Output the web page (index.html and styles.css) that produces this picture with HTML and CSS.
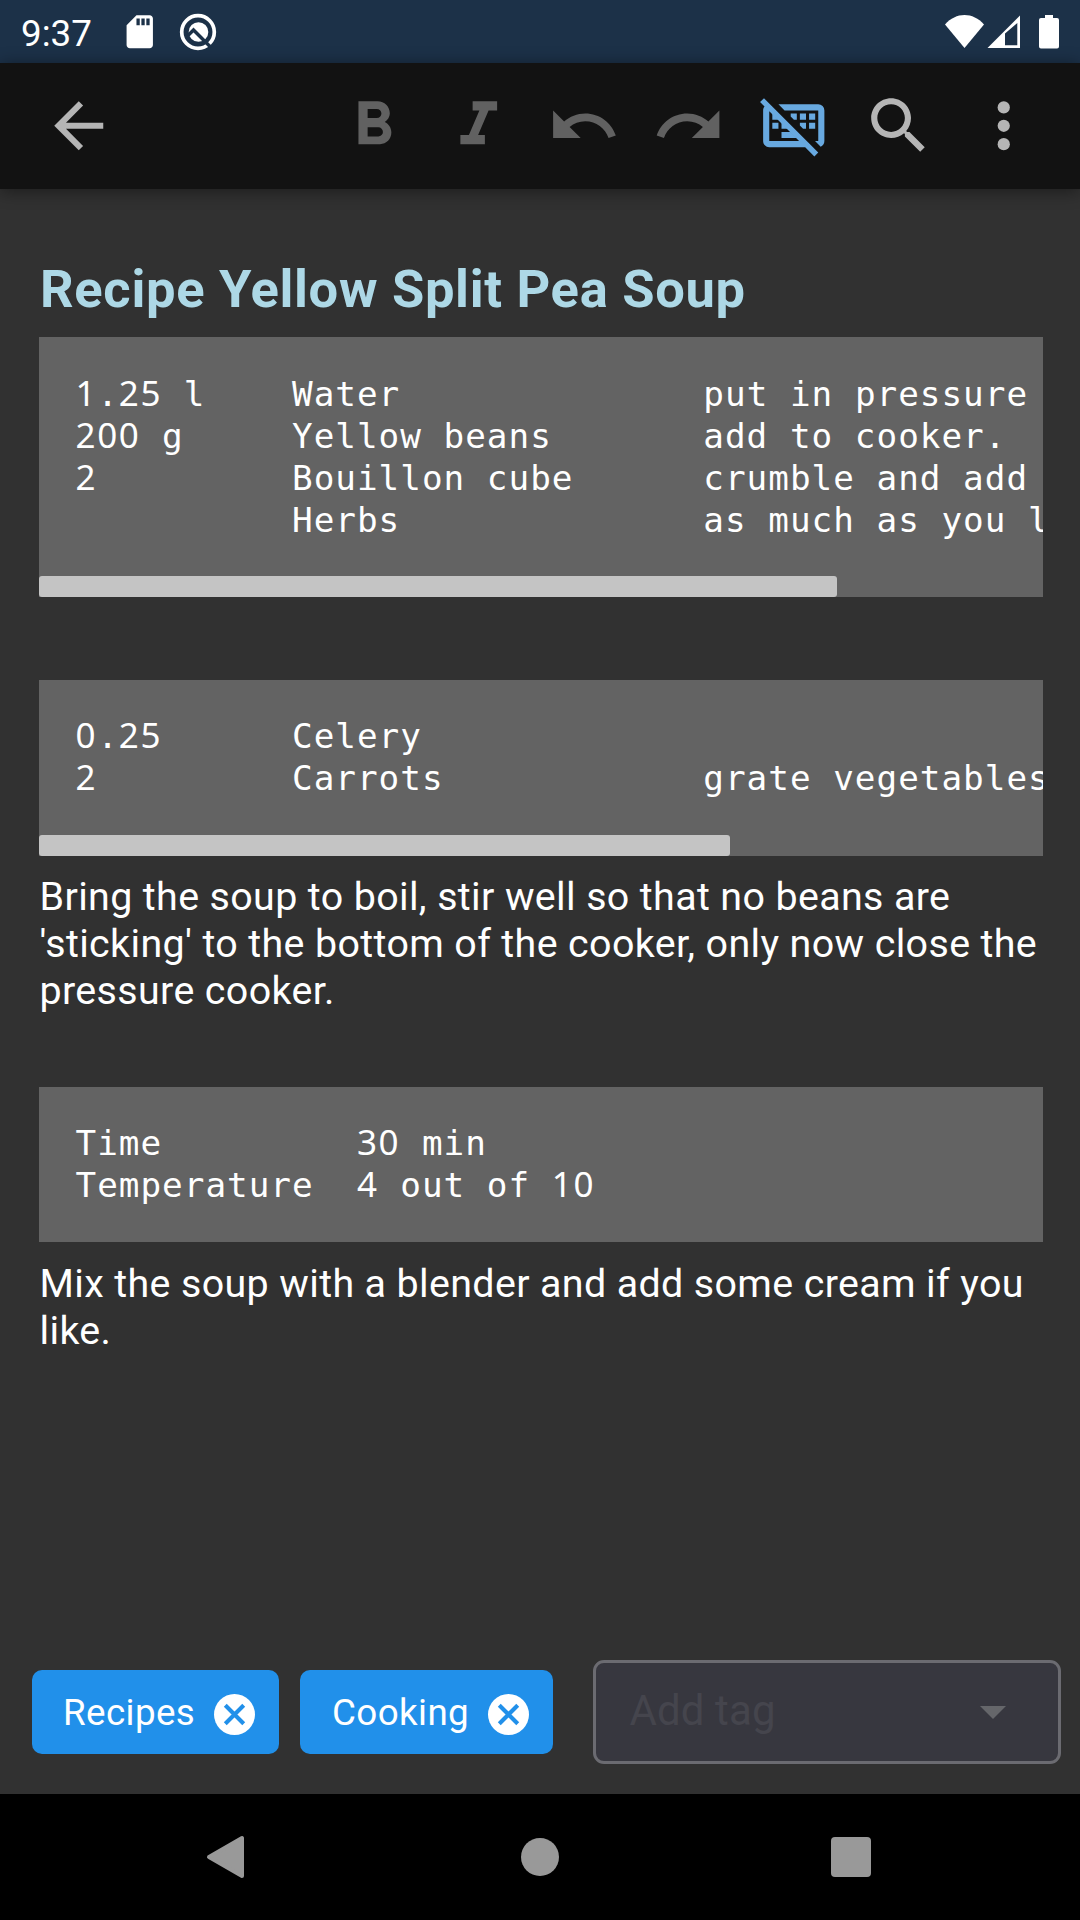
FILE: index.html
```html
<!DOCTYPE html>
<html lang="en">
<head>
<meta charset="utf-8">
<title>Recipe Yellow Split Pea Soup</title>
<link rel="stylesheet" href="styles.css">
</head>
<body>
<div class="screen">
  <header class="status">
    <span class="clock">9:37</span>
    <svg class="sd" viewBox="0 0 24 24"><path d="M18 2h-8L4 8v12c0 1.100.9 2 2 2h12c1.100 0 2-.9 2-2V4c0-1.100-.9-2-2-2zm-6 6h-2V4h2v4zm3 0h-2V4h2v4zm3 0h-2V4h2v4z"/></svg>
    <svg class="debug" viewBox="0 0 38 38">
      <circle cx="19" cy="19" r="16.300" fill="none" stroke="#fff" stroke-width="3.700"/>
      <circle cx="19.500" cy="19" r="9.800"/>
      <path class="cut" d="M9 22.500L14.500 17L32 34.500"/>
    </svg>
    <svg class="signals" viewBox="0 0 116 36">
      <path d="M0 10.500C11-2.200 28-2.200 39 10.500L19.500 34z"/>
      <path fill-rule="evenodd" d="M42.500 34L75 1.500V34zM60 19.500V31.300H72.300V9z"/>
      <path d="M100 1h8v3h4q2 0 2 2v26.500q0 2-2 2H96q-2 0-2-2V6q0-2 2-2h4z"/>
    </svg>
  </header>
  <nav class="toolbar">
    <svg class="icon back" viewBox="0 0 24 24"><path d="M20 11H7.830l5.590-5.590L12 4l-8 8 8 8 1.410-1.410L7.830 13H20v-2z"/></svg>
    <div class="actions">
      <svg class="icon dim" viewBox="0 0 24 24"><path d="M13.500,15.500H10V12.500H13.500A1.500,1.500 0 0,1 15,14A1.500,1.500 0 0,1 13.500,15.500M10,6.500H13A1.500,1.500 0 0,1 14.500,8A1.500,1.500 0 0,1 13,9.500H10M15.600,10.790C16.570,10.110 17.250,9 17.250,8C17.250,5.740 15.500,4 13.250,4H7V18H14.040C16.140,18 17.750,16.300 17.750,14.210C17.750,12.690 16.890,11.390 15.600,10.790Z"/></svg>
      <svg class="icon dim" viewBox="0 0 24 24"><path d="M10,4V7H12.210L8.790,15H6V18H14V15H11.790L15.210,7H18V4H10Z"/></svg>
      <svg class="icon dim" viewBox="0 0 24 24"><path d="M12.500 8c-2.650 0-5.050.99-6.900 2.600L2 7v9h9l-3.620-3.620c1.390-1.160 3.160-1.880 5.120-1.880 3.540 0 6.550 2.310 7.600 5.500l2.370-.78C21.080 11.030 17.150 8 12.500 8z"/></svg>
      <svg class="icon dim" viewBox="0 0 24 24"><path d="M18.400 10.600C16.550 8.990 14.150 8 11.500 8c-4.650 0-8.580 3.030-9.960 7.220L3.900 16c1.050-3.190 4.050-5.500 7.600-5.500 1.950 0 3.730.72 5.120 1.880L13 16h9V7l-3.600 3.600z"/></svg>
      <svg class="icon active" viewBox="0 0 24 24">
        <path fill-rule="evenodd" d="M1,4.270L2.280,3 20,20.720 18.730,22 15.730,19H4C2.890,19 2,18.100 2,17V7C2,6.500 2.180,6.070 2.460,5.730zM4,7.270V17H13.730z"/>
        <path d="M7,5H20a2,2 0 0 1 2,2v10c0,.86-.5,1.600-1.200,1.860L18.950,17H20V7H9z"/>
        <path d="M5,8V10H7zM11,8h2v2h-.95L11,8.950zM14,8h2v2h-2zM17,8h2v2h-2zM5,11h2v2H5zM8,11v2h2zM14,11h2v2h-.95L14,11.950zM17,11h2v2h-2zM8,14h3l2,2H8z"/>
      </svg>
      <svg class="icon" viewBox="0 0 24 24"><path d="M15.500 14h-.79l-.28-.27C15.410 12.590 16 11.110 16 9.500 16 5.910 13.090 3 9.500 3S3 5.910 3 9.500 5.910 16 9.500 16c1.610 0 3.090-.59 4.230-1.570l.27.28v.79l5 4.990L20.490 19l-4.990-5zm-6 0C7.010 14 5 11.990 5 9.500S7.010 5 9.500 5 14 7.010 14 9.500 11.990 14 9.500 14z"/></svg>
      <svg class="icon" viewBox="0 0 24 24"><circle cx="12" cy="6" r="2"/><circle cx="12" cy="12" r="2"/><circle cx="12" cy="18" r="2"/></svg>
    </div>
  </nav>
  <main class="note">
    <h1 class="title">Recipe Yellow Split Pea Soup</h1>
    <div class="code first">
<pre class="lines"><b class="n">1</b>.<b class="n">25</b> l    Water              put in pressure cooker
<b class="n">200</b> g     Yellow beans       add to cooker.
<b class="n">2</b>         Bouillon cube      crumble and add
          Herbs              as much as you like</pre>
      <div class="track"><div class="thumb" style="width:798px"></div></div>
    </div>
    <div class="code second">
<pre class="lines"><b class="n">0</b>.<b class="n">25</b>      Celery
<b class="n">2</b>         Carrots            grate vegetables</pre>
      <div class="track"><div class="thumb" style="width:691px"></div></div>
    </div>
    <p class="text">Bring the soup to boil, stir well so that no beans are<br>'sticking' to the bottom of the cooker, only now close the<br>pressure cooker.</p>
    <div class="code third">
<pre class="lines">Time         <b class="n">30</b> min
Temperature  <b class="n">4</b> out of <b class="n">10</b></pre>
    </div>
    <p class="text">Mix the soup with a blender and add some cream if you<br>like.</p>
  </main>
  <section class="tags">
    <div class="chip recipes"><span>Recipes</span><svg class="remove" viewBox="0 0 40 40"><circle cx="20" cy="20" r="20"/><path d="M11 11L29 29M29 11L11 29"/></svg></div>
    <div class="chip cooking"><span>Cooking</span><svg class="remove" viewBox="0 0 40 40"><circle cx="20" cy="20" r="20"/><path d="M11 11L29 29M29 11L11 29"/></svg></div>
    <div class="field"><span>Add tag</span><svg class="caret" viewBox="0 0 26 13"><path d="M0 0H26L13 13z"/></svg></div>
  </section>
  <footer class="navbar">
    <svg class="nav-icons" viewBox="0 0 1080 126">
      <path d="M209 63L242 44V82z" stroke="#999" stroke-width="4" stroke-linejoin="round"/>
      <circle cx="540" cy="63" r="19"/>
      <rect x="831" y="43" width="40" height="40" rx="4"/>
    </svg>
  </footer>
</div>
</body>
</html>
```
FILE: styles.css
```css
* { box-sizing: border-box; }
body { margin: 0; background: #313131; font-family: Roboto, sans-serif; color: #fff; }
.screen { width: 1080px; height: 1920px; display: flex; flex-direction: column; overflow: hidden; }
svg { display: block; flex: none; fill: currentColor; }

.status { height: 63px; flex: none; background: #1c3148; display: flex; align-items: center; padding: 0 20px 0 21px; }
.clock { font-size: 36.75px; line-height: 63px; width: 99px; padding-top: 3px; }
.sd { width: 39.5px; height: 39.5px; }
.debug { width: 38px; height: 38px; margin-left: 19px; }
.cut { fill: none; stroke: #1c3148; stroke-width: 3.4; }
.signals { width: 116px; height: 36px; margin-left: auto; margin-right: -1px; }

.toolbar { height: 126px; flex: none; background: #121212; color: #b5b5b5; display: flex; align-items: center; justify-content: space-between; padding: 0 40px 0 42px; box-shadow: 0 2px 16px rgba(0,0,0,.45); z-index: 1; }
.actions { display: flex; gap: 31.5px; }
.icon { width: 73.5px; height: 73.5px; }
.dim { color: #616161; }
.active { color: #68a9e0; }

.note { flex: 1; padding: 66px 37px 0 39px; }
.title { margin: 0; padding-left: 1px; font-size: 52.5px; line-height: 68px; font-weight: 700; letter-spacing: .68px; color: #add8e6; height: 82px; white-space: nowrap; }
.code { background: #636363; overflow: hidden; padding-top: 35px; height: 260px; display: flex; flex-direction: column; justify-content: space-between; }
.first { padding-top: 36px; }
.second { margin-top: 83px; height: 176px; }
.third { margin-top: 73px; height: 155px; }
.lines { margin: 0; padding-left: 36.5px; font: 34.3px/42px "DejaVu Sans Mono", monospace; letter-spacing: 1px; }
.n { font: 35px/0 "Noto Sans", sans-serif; letter-spacing: 1.63px; }
.track { height: 21px; }
.thumb { height: 21px; background: #c4c4c4; border-radius: 3px; }
.text { margin: 0; padding: 17px 0 0 .5px; font-size: 39.4px; line-height: 47px; letter-spacing: .37px; white-space: nowrap; }
.third + .text { padding-top: 18px; }

.tags { height: 174px; flex: none; display: flex; align-items: center; padding: 10px 19px 0 32px; }
.chip { height: 84px; background: #2190ea; border-radius: 10px; display: flex; align-items: center; justify-content: space-between; padding: 0 24px 0 31px; font-size: 36.75px; letter-spacing: .4px; }
.recipes { width: 247px; margin-right: 21px; }
.cooking { width: 253px; margin-right: 40px; padding-left: 32px; }
.remove { width: 41px; height: 41px; margin-top: 5px; }
.remove path { stroke: #2190ea; stroke-width: 4; }
.field { height: 104px; flex: 1; background: #37373f; border: 3px solid #6b6b71; border-radius: 11px; display: flex; align-items: center; justify-content: space-between; padding: 0 52.5px 0 33.5px; font-size: 42px; color: #45454d; letter-spacing: .1px; }
.field span { padding-bottom: 3px; }
.caret { width: 26px; height: 13px; color: #65666a; }

.navbar { height: 126px; flex: none; background: #000; color: #999; }
.nav-icons { width: 1080px; height: 126px; }
```
